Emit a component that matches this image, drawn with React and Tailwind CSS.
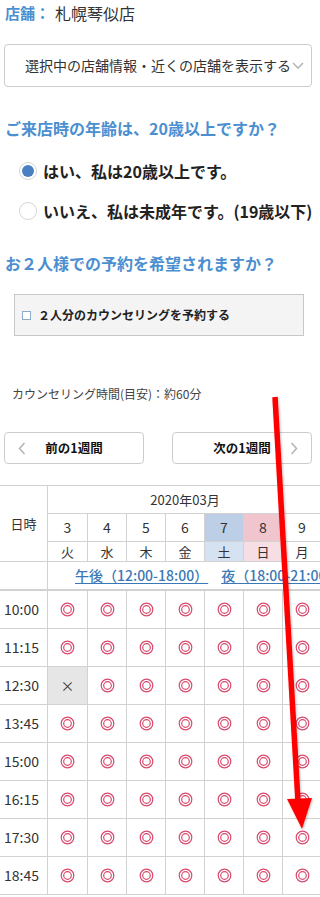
import React from "react";

const days = [
  { d: "3", w: "火" },
  { d: "4", w: "水" },
  { d: "5", w: "木" },
  { d: "6", w: "金" },
  { d: "7", w: "土", num: "bg-[#bccfe6]", wk: "bg-[#d5e2f1]" },
  { d: "8", w: "日", num: "bg-[#f0c5cd]", wk: "bg-[#f7dde4]" },
  { d: "9", w: "月" },
];

const times = ["10:00", "11:15", "12:30", "13:45", "15:00", "16:15", "17:30", "18:45"];

function DoubleCircle() {
  return (
    <svg width="15" height="15" viewBox="0 0 15 15">
      <circle cx="7.5" cy="7.5" r="6.3" fill="none" stroke="#d8496c" strokeWidth="1.2" />
      <circle cx="7.5" cy="7.5" r="3.8" fill="none" stroke="#d8496c" strokeWidth="1.2" />
    </svg>
  );
}

function Chevron({ dir }) {
  return (
    <svg width="8" height="13" viewBox="0 0 8 13">
      <path
        d={dir === "left" ? "M6.5 1 L1.5 6.5 L6.5 12" : "M1.5 1 L6.5 6.5 L1.5 12"}
        fill="none"
        stroke="#b5b5b5"
        strokeWidth="1.6"
      />
    </svg>
  );
}

export default function App() {
  const font = { fontFamily: '"Noto Sans CJK JP", "Noto Sans", sans-serif' };
  return (
    <div className="relative w-[320px] bg-white text-[#333] overflow-hidden" style={font}>
      {/* Shop */}
      <div className="px-[5px] pt-[2px] h-[24px] flex items-center">
        <span className="text-[15px] font-bold text-[#4b8fd1]">店舗：</span>
        <span className="ml-[5px] text-[16px]">札幌琴似店</span>
      </div>

      <div className="mt-[20px] mx-[4px] h-[43px] w-[308px] border border-[#cccccc] rounded-[4px] flex items-center pl-[20px] text-[14px] text-[#333]">
        <span className="whitespace-nowrap">選択中の店舗情報・近くの店舗を表示する</span>
        <svg className="ml-[1px]" width="12" height="8" viewBox="0 0 12 8">
          <path d="M1 1 L6 6 L11 1" fill="none" stroke="#b8b8b8" strokeWidth="1.6" />
        </svg>
      </div>

      {/* Age */}
      <h2 className="mt-[29px] px-[5px] text-[16px] font-bold text-[#4b8fd1] leading-[24px]">
        ご来店時の年齢は、20歳以上ですか？
      </h2>
      <div className="mt-[22px] pl-[19px] flex flex-col gap-[22px]">
        <label className="flex items-center gap-[6px] h-[18px] text-[16px] font-bold text-[#222] whitespace-nowrap">
          <span className="w-[18px] h-[18px] rounded-full border border-[#d6d6d6] flex items-center justify-center shrink-0">
            <span className="w-[12px] h-[12px] rounded-full bg-[#4a80c2]" />
          </span>
          はい、私は20歳以上です。
        </label>
        <label className="flex items-center gap-[6px] h-[18px] text-[16px] font-bold text-[#222] whitespace-nowrap">
          <span className="w-[18px] h-[18px] rounded-full border border-[#d6d6d6] shrink-0" />
          いいえ、私は未成年です。(19歳以下)
        </label>
      </div>

      {/* Pair */}
      <h2 className="mt-[31px] px-[5px] text-[16px] font-bold text-[#4b8fd1] leading-[24px]">
        お２人様での予約を希望されますか？
      </h2>
      <div className="mt-[19px] mx-[14px] w-[290px] h-[42px] bg-[#f4f4f4] border border-[#c8c8c8] flex items-center pl-[7px] gap-[7px]">
        <span className="w-[9px] h-[9px] border border-[#8fa9c8] bg-white shrink-0" />
        <span className="text-[12px] font-bold text-[#222] whitespace-nowrap">２人分のカウンセリングを予約する</span>
      </div>

      <p className="mt-[49px] px-[12px] text-[12px] text-[#444] leading-[18px]">
        カウンセリング時間(目安)：約60分
      </p>

      {/* Week nav */}
      <div className="mt-[29px] px-[4px] flex justify-between w-[316px]">
        <button className="w-[140px] h-[32px] border border-[#cccccc] rounded-[4px] flex items-center pl-[13px]">
          <Chevron dir="left" />
          <span className="flex-1 pr-[21px] text-center text-[12.5px] font-bold text-[#111]">前の1週間</span>
        </button>
        <button className="w-[140px] h-[32px] border border-[#cccccc] rounded-[4px] flex items-center pr-[13px]">
          <span className="flex-1 pl-[21px] text-center text-[12.5px] font-bold text-[#111]">次の1週間</span>
          <Chevron dir="right" />
        </button>
      </div>

      {/* Calendar */}
      <div className="mt-[21px] w-[320px] overflow-hidden">
        <div className="w-[322px] border-t border-[#d2d2d2] grid grid-cols-[48px_40px_39px_39px_39px_39px_39px_39px] text-[#333]">
          <div className="row-span-3 border-r border-b border-[#d2d2d2] flex items-center justify-center text-[13px]">
            日時
          </div>
          <div className="col-span-7 h-[28px] border-b border-[#d2d2d2] flex items-center justify-center text-[13px]">
            2020年03月
          </div>
          {days.map((x) => (
            <div
              key={"n" + x.d}
              className={`h-[28px] border-r border-b border-[#d2d2d2] flex items-center justify-center text-[14px] ${x.num || ""}`}
            >
              {x.d}
            </div>
          ))}
          {days.map((x) => (
            <div
              key={"w" + x.d}
              className={`h-[20px] border-r border-b border-[#d2d2d2] flex items-center justify-center text-[13px] ${x.wk || ""}`}
            >
              {x.w}
            </div>
          ))}
          <div className="h-[29px] border-r border-b-2 border-[#d2d2d2]" />
          <div className="col-span-7 h-[29px] border-b-2 border-[#d2d2d2] flex items-center pl-[27px] gap-[13px] text-[14px] font-medium text-[#3b78b5] whitespace-nowrap overflow-hidden">
            <span className="underline underline-offset-2">午後（12:00-18:00）</span>
            <span className="underline underline-offset-2">夜（18:00-21:00）</span>
          </div>
          {times.map((t) => (
            <React.Fragment key={t}>
              <div className="h-[38px] border-r border-b border-[#d2d2d2] flex items-center pl-[4px] text-[14px] text-[#333]">
                {t}
              </div>
              {days.map((x, i) =>
                t === "12:30" && i === 0 ? (
                  <div
                    key={x.d}
                    className="h-[38px] border-r border-b border-[#d2d2d2] bg-[#e6e6e6] flex items-center justify-center text-[14px] text-[#444]"
                  >
                    ×
                  </div>
                ) : (
                  <div key={x.d} className="h-[38px] border-r border-b border-[#d2d2d2] flex items-center justify-center">
                    <DoubleCircle />
                  </div>
                )
              )}
            </React.Fragment>
          ))}
        </div>
      </div>
      <div className="h-[4px]" />

      {/* Annotation arrow */}
      <svg className="absolute left-0 top-0 pointer-events-none" width="320" height="897" viewBox="0 0 320 897">
        <defs>
          <filter id="sh" x="-20%" y="-5%" width="140%" height="110%">
            <feDropShadow dx="1" dy="1" stdDeviation="1" floodColor="#000" floodOpacity="0.25" />
          </filter>
        </defs>
        <g filter="url(#sh)">
          <path d="M275 397 L298 802" stroke="#ff0000" strokeWidth="5.5" strokeLinecap="butt" fill="none" />
          <path d="M287 799 L312 798 L302 829 Z" fill="#ff0000" />
        </g>
      </svg>
    </div>
  );
}
